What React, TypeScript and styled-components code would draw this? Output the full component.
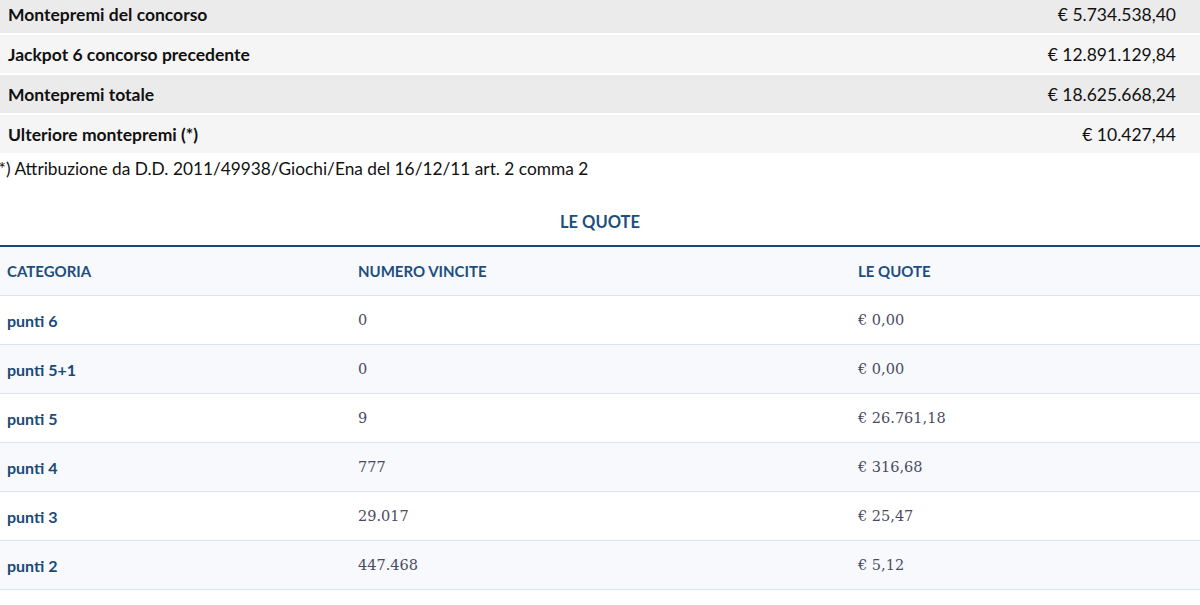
import React from "react";
import styled, { createGlobalStyle } from "styled-components";

const Global = createGlobalStyle`
  html, body { margin: 0; padding: 0; background: #fff; }
  body { font-family: "Lato", "Open Sans", sans-serif; overflow: hidden; }
`;

const Page = styled.div`
  width: 1200px;
  margin-top: -5px;
`;

const SummaryTable = styled.div`
  display: flex;
  flex-direction: column;
`;

const SummaryRow = styled.div<{ $odd: boolean }>`
  display: flex;
  justify-content: space-between;
  align-items: center;
  height: 38px;
  padding: 0 24px 0 8px;
  background: ${(p) => (p.$odd ? "#ebebeb" : "#f5f5f5")};
  border-bottom: 2px solid #fff;
  font-size: 17.5px;
  color: #111;
`;

const SummaryLabel = styled.span`
  font-weight: 700;
`;

const SummaryValue = styled.span`
  font-weight: 400;
`;

const Note = styled.p`
  margin: 2px 0 0 -6px;
  font-size: 17.3px;
  line-height: 24px;
  color: #111;
`;

const Title = styled.h3`
  margin: 29px 0 0;
  text-align: center;
  font-size: 16.5px;
  line-height: 24px;
  font-weight: 700;
  color: #1d4e7e;
  padding-bottom: 11px;
  border-bottom: 2px solid #1a4774;
`;

const Grid = styled.div`
  display: grid;
  grid-template-columns: 351px 500px 1fr;
`;

const HeadCell = styled.div`
  height: 48px;
  display: flex;
  align-items: center;
  padding-left: 7px;
  background: #f7f9fd;
  border-bottom: 1px solid #dce6ef;
  font-size: 15px;
  font-weight: 700;
  color: #1d4e7e;
  text-transform: uppercase;
`;

const Cell = styled.div<{ $alt: boolean; $kind: "label" | "value" }>`
  height: 48px;
  display: flex;
  align-items: center;
  padding-left: 7px;
  background: ${(p) => (p.$alt ? "#f7f9fd" : "#ffffff")};
  border-bottom: 1px solid #dce6ef;
  ${(p) =>
    p.$kind === "label"
      ? `font-size: 16px; font-weight: 700; color: #1b4a77;`
      : `font-family: "DejaVu Serif", "Liberation Serif", serif; font-size: 14.5px; color: #4a4b63; font-variant-numeric: oldstyle-nums;`}
`;

const summary = [
  ["Montepremi del concorso", "€ 5.734.538,40"],
  ["Jackpot 6 concorso precedente", "€ 12.891.129,84"],
  ["Montepremi totale", "€ 18.625.668,24"],
  ["Ulteriore montepremi (*)", "€ 10.427,44"],
];

const quote = [
  ["punti 6", "0", "€ 0,00"],
  ["punti 5+1", "0", "€ 0,00"],
  ["punti 5", "9", "€ 26.761,18"],
  ["punti 4", "777", "€ 316,68"],
  ["punti 3", "29.017", "€ 25,47"],
  ["punti 2", "447.468", "€ 5,12"],
];

export default function App() {
  return (
    <Page>
      <Global />
      <SummaryTable>
        {summary.map(([l, v], i) => (
          <SummaryRow key={l} $odd={i % 2 === 0}>
            <SummaryLabel>{l}</SummaryLabel>
            <SummaryValue>{v}</SummaryValue>
          </SummaryRow>
        ))}
      </SummaryTable>
      <Note>(*) Attribuzione da D.D. 2011/49938/Giochi/Ena del 16/12/11 art. 2 comma 2</Note>
      <Title>LE QUOTE</Title>
      <Grid>
        <HeadCell>Categoria</HeadCell>
        <HeadCell>Numero vincite</HeadCell>
        <HeadCell>Le quote</HeadCell>
        {quote.map(([a, b, c], i) => (
          <React.Fragment key={a}>
            <Cell $alt={i % 2 === 1} $kind="label">{a}</Cell>
            <Cell $alt={i % 2 === 1} $kind="value">{b}</Cell>
            <Cell $alt={i % 2 === 1} $kind="value">{c}</Cell>
          </React.Fragment>
        ))}
      </Grid>
    </Page>
  );
}
